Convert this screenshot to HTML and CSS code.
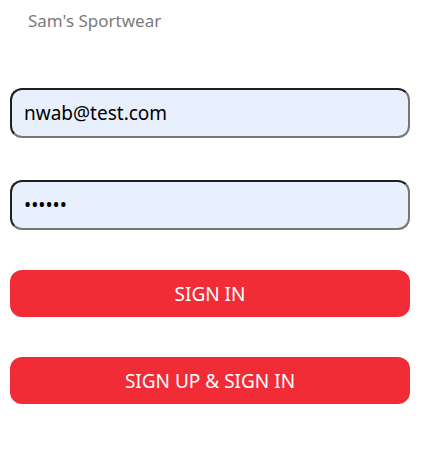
FILE: index.html
```html
<!DOCTYPE html>
<html>
<head>
<meta charset="utf-8">
<link rel="stylesheet" href="styles.css">
</head>
<body>
<div class="page">
  <div class="brand">Sam's Sportwear</div>
  <form class="form">
    <input class="field field-email" type="email" value="nwab@test.com">
    <input class="field field-pass" type="password" value="123456">
    <button class="btn btn-signin" type="button">SIGN IN</button>
    <button class="btn" type="button">SIGN UP &amp; SIGN IN</button>
  </form>
</div>
</body>
</html>
```

FILE: styles.css
```css
html, body {
  margin: 0;
  padding: 0;
  background: #ffffff;
}
.page {
  padding: 0 11px 0 10px;
  font-family: "Noto Sans", "Open Sans", sans-serif;
}
.brand {
  padding: 10px 0 0 18px;
  height: 26px;
  line-height: 22px;
  font-size: 17px;
  color: #7a7a7a;
}
.form {
  display: flex;
  flex-direction: column;
  margin-top: 52px;
}
.field {
  box-sizing: border-box;
  width: 100%;
  height: 50px;
  margin: 0;
  padding: 0 12px;
  border: 2px solid #767676;
  border-top-color: #1f1f1f;
  border-left-color: #1f1f1f;
  border-radius: 12px;
  background: #e8f0fe;
  color: #000000;
  font-family: "Noto Sans", "Open Sans", sans-serif;
  font-size: 19px;
  outline: none;
}
.field-email {
  margin-bottom: 42px;
}
.field-pass {
  margin-bottom: 40px;
}
.btn {
  box-sizing: border-box;
  width: 100%;
  height: 47px;
  margin: 0;
  border: none;
  border-radius: 12px;
  background: #f22c37;
  color: #ffffff;
  font-family: "Noto Sans", "Open Sans", sans-serif;
  font-size: 19px;
  cursor: pointer;
}
.btn-signin {
  margin-bottom: 40px;
}
```
